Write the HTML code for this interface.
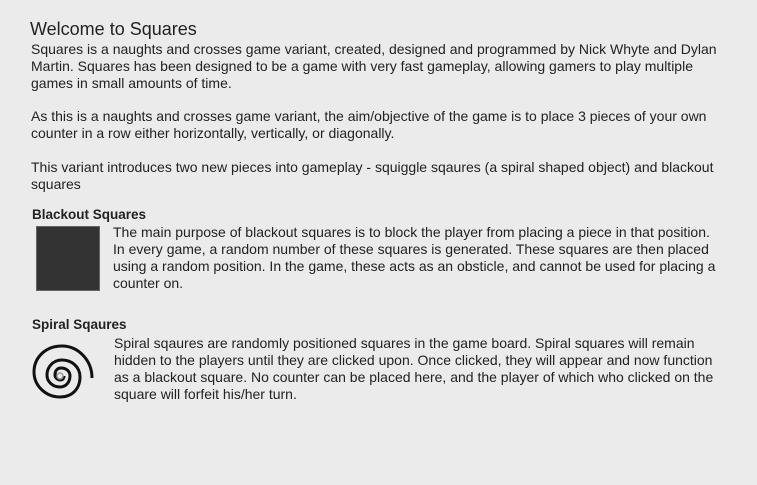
<!DOCTYPE html>
<html><head><style>
body{margin:0;background:#ebebeb;width:757px;height:485px;overflow:hidden;font-family:"Liberation Sans",Arial,sans-serif;color:#222;}
.t{position:absolute;left:30px;top:19px;font-size:18px;color:#222}
p{position:absolute;left:31px;margin:0;font-size:14px;line-height:17px;width:700px}
h4{position:absolute;left:32px;margin:0;font-size:13.5px;font-weight:bold;color:#222}
.sq{position:absolute;left:36px;top:226px;width:62px;height:63px;background:#333;border:1px solid #666}
</style></head><body>
<div class="t">Welcome to Squares</div>
<p style="top:41px">Squares is a naughts and crosses game variant, created, designed and programmed by Nick Whyte and Dylan Martin. Squares has been designed to be a game with very fast gameplay, allowing gamers to play multiple games in small amounts of time.</p>
<p style="top:108px">As this is a naughts and crosses game variant, the aim/objective of the game is to place 3 pieces of your own counter in a row either horizontally, vertically, or diagonally.</p>
<p style="top:159px">This variant introduces two new pieces into gameplay - squiggle sqaures (a spiral shaped object) and blackout squares</p>
<h4 style="top:207px">Blackout Squares</h4>
<div class="sq"></div>
<p style="left:113px;top:224px;width:610px">The main purpose of blackout squares is to block the player from placing a piece in that position. In every game, a random number of these squares is generated. These squares are then placed using a random position. In the game, these acts as an obsticle, and cannot be used for placing a counter on.</p>
<h4 style="top:317px">Spiral Sqaures</h4>
<svg style="position:absolute;left:28px;top:340px" width="72" height="62" viewBox="0 0 72 62">
<path d="M64 38 A30 29 0 1 0 36 57 A30 29 0 0 0 64 38" fill="none" stroke="none"/>
<path d="M64 38 C64 20 50 6 34 6 C17 6 6 18 6 32 C6 46 18 57 32 57 C45 57 52 48 52 37 C52 27 44 20 34 20 C25 20 19 27 19 35 C19 42 25 47 32 47 C38 47 42 42 42 36 C42 31 38 28 33 28 C29 28 27 31 27 35 C27 38 30 40 32 40 C35 40 36 38 36 36" fill="none" stroke="#111" stroke-width="3"/>
<circle cx="32" cy="36" r="3" fill="none" stroke="#999" stroke-width="1.5"/>
</svg>
<p style="left:114px;top:335px;width:610px">Spiral sqaures are randomly positioned squares in the game board. Spiral squares will remain hidden to the players until they are clicked upon. Once clicked, they will appear and now function as a blackout square. No counter can be placed here, and the player of which who clicked on the square will forfeit his/her turn.</p>
</body></html>
